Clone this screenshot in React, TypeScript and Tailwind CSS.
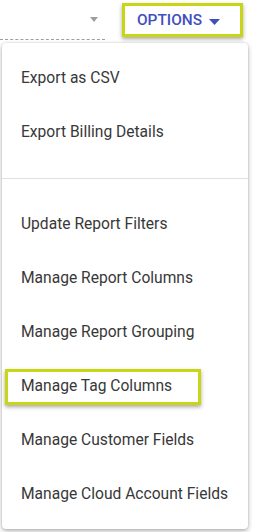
import React from "react";

const items1 = ["Export as CSV", "Export Billing Details"];
const items2 = [
  "Update Report Filters",
  "Manage Report Columns",
  "Manage Report Grouping",
  "Manage Tag Columns",
  "Manage Customer Fields",
  "Manage Cloud Account Fields",
];

function Item({ label }: { label: string }) {
  const hl = label === "Manage Tag Columns";
  return (
    <div className="relative h-[54px] flex items-center pl-[19px] pt-[4px] text-[15.6px] text-[#383838]">
      {hl && (
        <div className="absolute left-[3px] top-[11px] w-[196px] h-[36px] border-[3px] border-[#c8d616] shadow-[0_2px_4px_rgba(0,0,0,0.35)]" />
      )}
      <span className="relative">{label}</span>
    </div>
  );
}

export default function App() {
  return (
    <div
      className="w-[255px] h-[532px] bg-white overflow-hidden"
      style={{ fontFamily: "Roboto, 'Liberation Sans', sans-serif" }}
    >
      <div className="flex h-[40px]">
        <div className="w-[105px] h-[40px] border-b border-dashed border-[#9e9e9e] flex items-start justify-end pr-[7px] pt-[17px]">
          <svg width="8" height="5" viewBox="0 0 8 5">
            <path d="M0 0 L8 0 L4 5 Z" fill="#9e9e9e" />
          </svg>
        </div>
        <div className="ml-[17px] mt-[3px] w-[121px] h-[34px] border-[3px] border-[#c8d616] shadow-[0_2px_4px_rgba(0,0,0,0.35)] flex items-center pl-[12px] pt-[2px] gap-[7px]">
          <span className="text-[15.4px] font-medium text-[#3f4fc0]">OPTIONS</span>
          <svg width="11" height="6" viewBox="0 0 11 6" className="mt-[1px]">
            <path d="M0 0 L11 0 L5.5 6 Z" fill="#3f4fc0" />
          </svg>
        </div>
      </div>
      <div className="ml-[2px] mt-[3px] w-[246px] bg-white rounded-[4px] shadow-[0_2px_5px_rgba(0,0,0,0.3),0_0_2px_rgba(0,0,0,0.15)] pt-[7px] pb-[9px]">
        {items1.map((l) => (
          <Item key={l} label={l} />
        ))}
        <div className="mt-[20px] mb-[17px] h-px bg-[#e0e0e0]" />
        {items2.map((l) => (
          <Item key={l} label={l} />
        ))}
      </div>
    </div>
  );
}
